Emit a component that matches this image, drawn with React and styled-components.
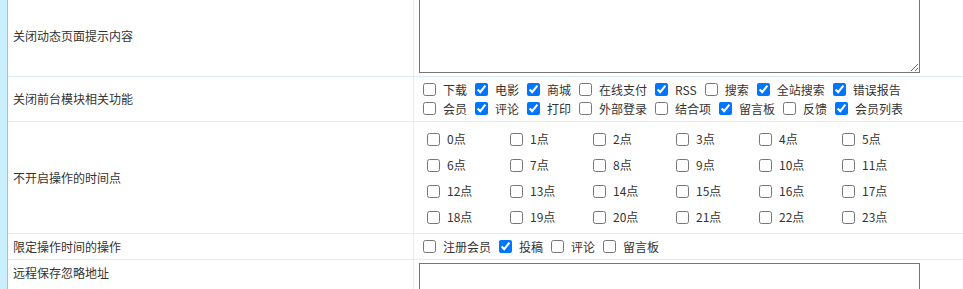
import React from "react";
import styled, { createGlobalStyle } from "styled-components";

const GlobalStyle = createGlobalStyle`
  html, body {
    margin: 0;
    padding: 0;
    background: #fff;
    overflow: hidden;
  }
  body {
    font-family: "Noto Sans CJK SC", "Noto Sans", sans-serif;
    font-size: 12px;
    color: #333;
  }
`;

const Page = styled.div`
  display: flex;
  width: 963px;
  height: 289px;
  overflow: hidden;
`;

const SideBar = styled.div`
  flex: 0 0 7px;
  background: #c9effc;
  border-right: 1px solid #7dd0f0;
`;

const Main = styled.div`
  flex: 1;
  min-width: 0;
`;

const Table = styled.table`
  width: 100%;
  border-collapse: collapse;
  margin-top: -5px;
`;

const Label = styled.td`
  width: 395px;
  padding: ${(p) => (p.$top ? "4px 5px" : "3px 5px")};
  vertical-align: ${(p) => (p.$top ? "top" : "middle")};
  line-height: 18px;
  border-right: 1px solid #d9eef8;
  border-bottom: 1px solid #d9eef8;
  white-space: nowrap;
`;

const Value = styled.td`
  padding: ${(p) => p.$pad || "3px 5px"};
  vertical-align: middle;
  border-bottom: 1px solid #d9eef8;
`;

const TextArea = styled.textarea`
  display: block;
  box-sizing: border-box;
  width: 501px;
  height: ${(p) => p.$h}px;
  margin: 0;
  border: 1px solid #767676;
  border-radius: 0;
  font-family: inherit;
  font-size: 12px;
`;

const CheckLine = styled.div`
  display: flex;
  align-items: center;
  height: ${(p) => p.$h || 19}px;
  white-space: nowrap;
`;

const Item = styled.label`
  display: inline-flex;
  align-items: center;
  margin-right: 4px;
  line-height: 18px;
`;

const Box = styled.input.attrs({ type: "checkbox" })`
  width: 13px;
  height: 13px;
  margin: 0 7px 0 4px;
`;

const HourGrid = styled.div`
  display: grid;
  grid-template-columns: repeat(6, 83px);
  grid-auto-rows: 26px;
  padding-left: 4px;
`;

const Hour = styled.label`
  display: flex;
  align-items: center;
  line-height: 18px;
`;

const Check = ({ label, on }) => (
  <Item>
    <Box defaultChecked={!!on} />
    {label}
  </Item>
);

const line1 = [
  ["下载", 0], ["电影", 1], ["商城", 1], ["在线支付", 0],
  ["RSS", 1], ["搜索", 0], ["全站搜索", 1], ["错误报告", 1],
];
const line2 = [
  ["会员", 0], ["评论", 1], ["打印", 1], ["外部登录", 0],
  ["结合项", 0], ["留言板", 1], ["反馈", 0], ["会员列表", 1],
];
const limits = [["注册会员", 0], ["投稿", 1], ["评论", 0], ["留言板", 0]];

export default function App() {
  return (
    <Page>
      <GlobalStyle />
      <SideBar />
      <Main>
        <Table>
          <tbody>
            <tr>
              <Label>关闭动态页面提示内容</Label>
              <Value>
                <TextArea $h={75} />
              </Value>
            </tr>
            <tr>
              <Label>关闭前台模块相关功能</Label>
              <Value>
                <CheckLine>
                  {line1.map(([t, c]) => (
                    <Check key={t} label={t} on={c} />
                  ))}
                </CheckLine>
                <CheckLine>
                  {line2.map(([t, c]) => (
                    <Check key={t} label={t} on={c} />
                  ))}
                </CheckLine>
              </Value>
            </tr>
            <tr>
              <Label>不开启操作的时间点</Label>
              <Value $pad="4px 5px 3px">
                <HourGrid>
                  {Array.from({ length: 24 }, (_, i) => (
                    <Hour key={i}>
                      <Box />
                      {i}点
                    </Hour>
                  ))}
                </HourGrid>
              </Value>
            </tr>
            <tr>
              <Label>限定操作时间的操作</Label>
              <Value>
                <CheckLine $h={19}>
                  {limits.map(([t, c]) => (
                    <Check key={t} label={t} on={c} />
                  ))}
                </CheckLine>
              </Value>
            </tr>
            <tr>
              <Label $top>远程保存忽略地址</Label>
              <Value>
                <TextArea $h={73} />
              </Value>
            </tr>
          </tbody>
        </Table>
      </Main>
    </Page>
  );
}
